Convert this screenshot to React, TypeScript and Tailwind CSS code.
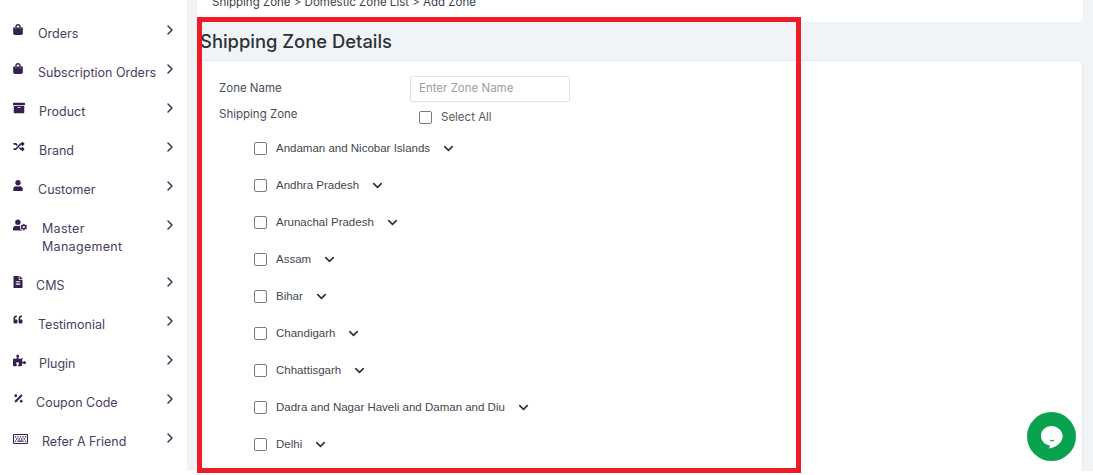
import { ChevronDown, ChevronRight } from 'lucide-react';
import {
  FaArchive,
  FaFileAlt,
  FaPercentage,
  FaPuzzlePiece,
  FaQuoteLeft,
  FaRandom,
  FaRegKeyboard,
  FaShoppingBag,
  FaUser,
  FaUserCog
} from 'react-icons/fa';

const menu = [
  { label: 'Orders', Icon: FaShoppingBag, labelClass: 'ml-[15px]', iconClass: 'w-[10px] h-[11px]' },
  { label: 'Subscription Orders', Icon: FaShoppingBag, labelClass: 'ml-[15px]', iconClass: 'w-[10px] h-[11px]' },
  { label: 'Product', Icon: FaArchive, labelClass: 'ml-[16px]', iconClass: 'w-[12px] h-[12px]' },
  { label: 'Brand', Icon: FaRandom, labelClass: 'ml-[16px]', iconClass: 'w-[12px] h-[11px]' },
  { label: 'Customer', Icon: FaUser, labelClass: 'ml-[15px]', iconClass: 'w-[10px] h-[11px]' },
  { label: 'Master Management', Icon: FaUserCog, labelClass: 'ml-[15px]', iconClass: 'w-[14px] h-[12px]' },
  { label: 'CMS', Icon: FaFileAlt, labelClass: 'ml-[13px]', iconClass: 'w-[10px] h-[12px]' },
  { label: 'Testimonial', Icon: FaQuoteLeft, labelClass: 'ml-[15px]', iconClass: 'w-[10px] h-[9px]' },
  { label: 'Plugin', Icon: FaPuzzlePiece, labelClass: 'ml-[16px]', iconClass: 'w-[13px] h-[13px]' },
  { label: 'Coupon Code', Icon: FaPercentage, labelClass: 'ml-[13px]', iconClass: 'w-[11px] h-[11px]' },
  { label: 'Refer A Friend', Icon: FaRegKeyboard, labelClass: 'ml-[19px]', iconClass: 'w-[15px] h-[14px]' }
];

const states = [
  'Andaman and Nicobar Islands',
  'Andhra Pradesh',
  'Arunachal Pradesh',
  'Assam',
  'Bihar',
  'Chandigarh',
  'Chhattisgarh',
  'Dadra and Nagar Haveli and Daman and Diu',
  'Delhi'
];

function Sidebar() {
  return (
    <aside className="w-[187px] shrink-0 bg-white pt-[19px] font-['Inter',sans-serif] text-[12.5px] text-[#4b3d63]">
      {menu.map(({ label, Icon, labelClass, iconClass }) => (
        <div key={label} className="flex items-start pl-[13px] pr-[9px] pb-[16px]">
          <div className="w-[10px] shrink-0 pt-[5px]">
            <Icon className={`${iconClass} text-[#35204f]`} />
          </div>
          <span className={`${labelClass} mb-[-1px] mt-[6px] flex-1 leading-[18px]`}>
            {label === 'Master Management' ? (
              <span className="ml-[4px] block tracking-[0.3px]">Master<br />Management</span>
            ) : label}
          </span>
          <ChevronRight className="mt-[3px] h-[16px] w-[16px] shrink-0 text-[#3d3158]" strokeWidth={2.2} />
        </div>
      ))}
    </aside>
  );
}

function ZoneRow({ name }: { name: string }) {
  return (
    <div className="flex h-[37px] items-center">
      <span className="h-[13px] w-[13px] rounded-[2px] border-[1.5px] border-[#7a7a7a] bg-white" />
      <span className="ml-[9px] text-[#43474d]">{name}</span>
      <ChevronDown className="ml-[11px] h-[15px] w-[15px] text-[#2f3236]" strokeWidth={2.6} />
    </div>
  );
}

function ChatBubble() {
  return (
    <div className="absolute left-[1027px] top-[412px] flex h-[49px] w-[49px] items-center justify-center rounded-full bg-[#0ba24f]">
      <svg viewBox="0 0 26 26" className="h-[25px] w-[25px]">
        <path d="M13 2C6.900 2 2 6.600 2 12.300c0 5.200 4 9.400 9.200 10.100.1 1.300-.3 2.200-1.200 3.100 3.600-.4 11.500-3.200 13.700-9.200.6-1.300 1-2.600 1-4C24 6.600 19.100 2 13 2z" fill="#fff" />
        <path d="M11 16.200c1.600 1 3.600 1 5.200 0-.3 1.400-1.300 2-2.600 2s-2.300-.6-2.600-2z" fill="#0ba24f" />
      </svg>
    </div>
  );
}

export default function App() {
  return (
    <div className="relative h-[475px] w-[1093px] overflow-hidden bg-white">
      <div className="flex h-[471px] overflow-hidden">
        <Sidebar />
        <main className="flex-1 bg-[#f1f4f6] px-[10px]">
          <div className="flex h-[22px] items-start rounded-b-[6px] bg-white pl-[15px]">
            <p className="mt-[-7px] font-['Inter',sans-serif] text-[11.5px] leading-[18px] text-[#3b3f46]">Shipping Zone &gt; Domestic Zone List &gt; Add Zone</p>
          </div>
          <h1 className="flex h-[38px] items-center pl-[3px] pt-[1px] font-['Inter',sans-serif] text-[18.4px] font-medium text-[#2c323a]">Shipping Zone Details</h1>
          <section className="h-[420px] rounded-t-[4px] border border-[#e6e9ec] bg-white pl-[21px] pt-[15px]">
            <div className="flex items-center font-['Inter',sans-serif] text-[11.5px] text-[#4a4f57]">
              <span className="w-[191px]">Zone Name</span>
              <div className="flex h-[26px] w-[160px] items-center rounded-[2px] border border-[#dde3ea] pl-[8px] text-[#9aa0a8]">Enter Zone Name</div>
            </div>
            <div className="mt-[4px] flex font-['Inter',sans-serif] text-[11.5px] text-[#4a4f57]">
              <span className="w-[200px]">Shipping Zone</span>
              <span className="mt-[5px] h-[13px] w-[13px] rounded-[2px] border-[1.5px] border-[#7a7a7a]" />
              <span className="ml-[9px] mt-[3px] text-[#555a61]">Select All</span>
            </div>
            <div className="ml-[35px] mt-[4px] font-['Liberation_Sans',sans-serif] text-[11.5px]">
              {states.map(state => <ZoneRow key={state} name={state} />)}
            </div>
          </section>
        </main>
      </div>
      <ChatBubble />
      <div className="pointer-events-none absolute left-[197px] top-[17px] h-[456px] w-[604px] border-[5px] border-[#ee1c25]" />
    </div>
  );
}
